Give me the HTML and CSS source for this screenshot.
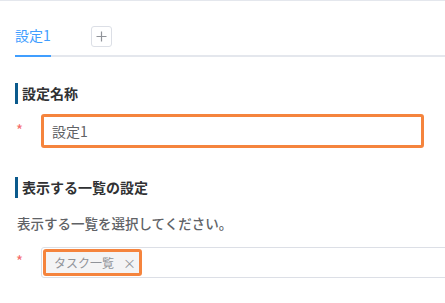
FILE: index.html
```html
<!doctype html>
<html lang="ja">
  <head>
    <meta charset="UTF-8" />
    <meta name="viewport" content="width=device-width, initial-scale=1.0" />
    <title>設定</title>
    <link rel="stylesheet" href="styles.css">
  </head>
  <body>
    <main class="panel">
      <div class="tabs">
        <div class="tab activo">設定1</div>
        <button class="tab-add" aria-label="追加">
          <svg width="11" height="11" viewBox="0 0 11 11">
            <path d="M5.5 0.5v10M0.5 5.5h10" stroke="#909399" stroke-width="1.2" fill="none" />
          </svg>
        </button>
      </div>

      <section class="bloque">
        <h2 class="titulo">設定名称</h2>
        <div class="fila">
          <span class="requerido">*</span>
          <div class="campo resaltado">設定1</div>
        </div>
      </section>

      <section class="bloque">
        <h2 class="titulo">表示する一覧の設定</h2>
        <p class="descripcion">表示する一覧を選択してください。</p>
        <div class="fila">
          <span class="requerido">*</span>
          <div class="selector">
            <span class="etiqueta">タスク一覧<span class="cerrar">×</span></span>
          </div>
        </div>
      </section>
    </main>
  </body>
</html>
```

FILE: styles.css
```css
body {
  margin: 0;
  font-family: "Noto Sans CJK JP", "Noto Sans", sans-serif;
  background-color: #fff;
  color: #303133;
  overflow: hidden;
}

.panel {
  border-top: 1px solid #e4e7ed;
  padding-left: 15px;
  width: 430px;
  height: 302px;
}

.tabs {
  display: flex;
  align-items: flex-start;
  height: 53px;
  border-bottom: 2px solid #e4e7ed;
  padding-top: 1px;
  margin-right: -15px;
}

.tab {
  font-size: 14px;
  line-height: 20px;
  height: 55px;
  box-sizing: border-box;
  padding-top: 23px;
}

.tab.activo {
  color: #409eff;
  box-shadow: inset 0 -2px 0 #409eff;
}

.tab-add {
  margin: 24px 0 0 40px;
  width: 21px;
  height: 21px;
  padding: 0;
  border: 1px solid #dcdfe6;
  border-radius: 3px;
  background: #fff;
  display: flex;
  align-items: center;
  justify-content: center;
}

.bloque {
  margin-top: 26px;
}

.bloque + .bloque {
  margin-top: 29px;
}

.titulo {
  margin: 0;
  font-size: 14px;
  font-weight: bold;
  line-height: 21px;
  border-left: 3px solid #0b5a8c;
  padding-left: 4px;
  color: #303133;
}

.descripcion {
  margin: 15px 0 0 2px;
  font-size: 13.5px;
  font-weight: 500;
  line-height: 20px;
  color: #606266;
}

.fila {
  display: flex;
  align-items: center;
  margin-top: 10px;
}

.bloque + .bloque .fila {
  margin-top: 14px;
}

.requerido {
  width: 25px;
  flex-shrink: 0;
  color: #f56c6c;
  font-size: 15px;
  padding-left: 1px;
  margin-top: -4px;
}

.campo {
  width: 383px;
  height: 34px;
  box-sizing: border-box;
  border-radius: 3px;
  padding-left: 8px;
  display: flex;
  align-items: center;
  font-size: 14px;
  color: #606266;
}

.resaltado {
  border: 3px solid #f5843d;
}

.selector {
  width: 420px;
  flex-shrink: 0;
  height: 31px;
  box-sizing: border-box;
  border: 1px solid #dcdfe6;
  border-radius: 3px;
  padding-left: 1px;
  display: flex;
  align-items: center;
}

.etiqueta {
  display: inline-flex;
  align-items: center;
  height: 27px;
  width: 99px;
  box-sizing: border-box;
  padding-left: 8px;
  background-color: #f4f4f5;
  border: 3px solid #f5843d;
  border-radius: 3px;
  font-size: 12px;
  color: #909399;
}

.cerrar {
  margin-left: 9px;
  font-size: 13px;
}
```
